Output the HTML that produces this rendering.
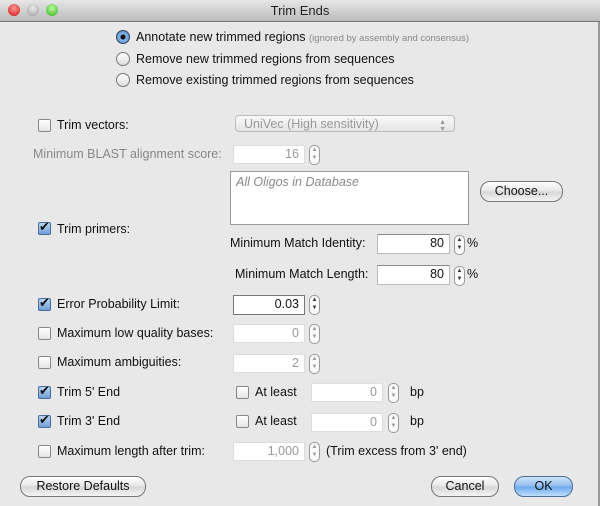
<!DOCTYPE html>
<html><head><style>
body{margin:0;width:600px;height:506px;overflow:hidden;background:#e8e8e8;font-family:"Liberation Sans",sans-serif;font-size:12.5px;color:#111;position:relative}
.a{position:absolute;white-space:nowrap}
.tb{position:absolute;left:0;top:0;width:600px;height:21px;background:linear-gradient(#e6e6e6,#bcbcbc);border-bottom:1px solid #777;text-align:center;line-height:21px;font-size:13px;color:#222}
.dot{position:absolute;top:4px;width:12px;height:12px;border-radius:50%}
.rad{position:absolute;width:12px;height:12px;border-radius:50%;border:1px solid #777;background:linear-gradient(#fff,#ddd)}
.cb{position:absolute;width:11px;height:11px;border:1px solid #888;border-radius:2px;background:linear-gradient(#fff,#e4e4e4)}
.cb.on{background:linear-gradient(#b8d4f0,#6fa0d8);border-color:#4a6f9a}
.cb.on:after{content:"✔";position:absolute;left:0px;top:-4px;font-size:13px;color:#111}
.f{position:absolute;background:#fff;border:1px solid #bbb;border-top-color:#888;text-align:right;padding-right:5px;box-sizing:border-box;line-height:17px}
.f.d{color:#999;border-color:#ddd}
.st{position:absolute;width:9px;height:18px;border:1px solid #999;border-radius:5px;background:#fafafa;font-size:6px;line-height:8px;text-align:center;color:#333}
.btn{position:absolute;height:19px;border:1px solid #777;border-radius:10px;background:linear-gradient(#fff,#e4e4e4 50%,#d6d6d6 51%,#f4f4f4);text-align:center;line-height:19px;font-size:12.5px}
.g{color:#888}
</style></head><body>
<div class="tb">Trim Ends</div>
<div class="dot" style="left:8px;background:radial-gradient(circle at 50% 35%,#f99,#c11)"></div>
<div class="dot" style="left:27px;background:radial-gradient(circle at 50% 35%,#eee,#999)"></div>
<div class="dot" style="left:46px;background:radial-gradient(circle at 50% 35%,#bf9,#3a2)"></div>
<div style="position:absolute;right:0;top:22px;width:2px;height:484px;background:#999"></div>

<div class="rad" style="left:116px;top:30px;background:radial-gradient(circle,#111 0 2px,#8ab8ea 3px,#3c7ed0);border-color:#345"></div>
<div class="a" style="left:136px;top:30px">Annotate new trimmed regions <span class="g" style="font-size:9.5px">(ignored by assembly and consensus)</span></div>
<div class="rad" style="left:116px;top:52px"></div>
<div class="a" style="left:136px;top:52px">Remove new trimmed regions from sequences</div>
<div class="rad" style="left:116px;top:73px"></div>
<div class="a" style="left:136px;top:73px">Remove existing trimmed regions from sequences</div>

<div class="cb" style="left:38px;top:119px"></div>
<div class="a" style="left:57px;top:118px">Trim vectors:</div>
<div class="a" style="left:235px;top:115px;width:220px;height:17px;border:1px solid #bbb;border-radius:4px;background:linear-gradient(#fafafa,#e4e4e4);color:#999;line-height:17px;padding-left:8px;box-sizing:border-box">UniVec (High sensitivity)<span style="position:absolute;right:8px;font-size:7px;line-height:7px;top:3px">▲<br>▼</span></div>

<div class="a g" style="left:33px;top:147px">Minimum BLAST alignment score:</div>
<div class="f d" style="left:233px;top:145px;width:72px;height:19px">16</div>
<div class="st" style="left:309px;top:145px;color:#999">▲<br>▼</div>

<div class="a" style="left:230px;top:171px;width:239px;height:54px;background:#fff;border:1px solid #999;box-sizing:border-box;color:#888;font-style:italic;padding:3px 5px">All Oligos in Database</div>
<div class="btn" style="left:480px;top:181px;width:81px">Choose...</div>
<div class="cb on" style="left:38px;top:222px"></div>
<div class="a" style="left:57px;top:222px">Trim primers:</div>

<div class="a" style="left:230px;top:236px">Minimum Match Identity:</div>
<div class="f" style="left:377px;top:234px;width:73px;height:20px">80</div>
<div class="st" style="left:454px;top:235px">▲<br>▼</div>
<div class="a" style="left:467px;top:236px">%</div>
<div class="a" style="left:235px;top:267px">Minimum Match Length:</div>
<div class="f" style="left:377px;top:265px;width:73px;height:20px">80</div>
<div class="st" style="left:454px;top:266px">▲<br>▼</div>
<div class="a" style="left:467px;top:267px">%</div>

<div class="cb on" style="left:38px;top:298px"></div>
<div class="a" style="left:57px;top:297px">Error Probability Limit:</div>
<div class="f" style="left:233px;top:295px;width:72px;height:20px;border-color:#777">0.03</div>
<div class="st" style="left:309px;top:295px">▲<br>▼</div>

<div class="cb" style="left:38px;top:327px"></div>
<div class="a" style="left:57px;top:326px">Maximum low quality bases:</div>
<div class="f d" style="left:233px;top:324px;width:72px;height:19px">0</div>
<div class="st" style="left:309px;top:324px;color:#999">▲<br>▼</div>

<div class="cb" style="left:38px;top:356px"></div>
<div class="a" style="left:57px;top:355px">Maximum ambiguities:</div>
<div class="f d" style="left:233px;top:354px;width:72px;height:19px">2</div>
<div class="st" style="left:309px;top:354px;color:#999">▲<br>▼</div>

<div class="cb on" style="left:38px;top:386px"></div>
<div class="a" style="left:57px;top:385px">Trim 5' End</div>
<div class="cb" style="left:236px;top:386px"></div>
<div class="a" style="left:255px;top:385px">At least</div>
<div class="f d" style="left:311px;top:383px;width:72px;height:19px">0</div>
<div class="st" style="left:388px;top:383px;color:#999">▲<br>▼</div>
<div class="a" style="left:410px;top:385px">bp</div>

<div class="cb on" style="left:38px;top:415px"></div>
<div class="a" style="left:57px;top:414px">Trim 3' End</div>
<div class="cb" style="left:236px;top:415px"></div>
<div class="a" style="left:255px;top:414px">At least</div>
<div class="f d" style="left:311px;top:413px;width:72px;height:19px">0</div>
<div class="st" style="left:388px;top:413px;color:#999">▲<br>▼</div>
<div class="a" style="left:410px;top:414px">bp</div>

<div class="cb" style="left:38px;top:445px"></div>
<div class="a" style="left:57px;top:444px">Maximum length after trim:</div>
<div class="f d" style="left:233px;top:442px;width:72px;height:19px">1,000</div>
<div class="st" style="left:309px;top:442px;color:#999">▲<br>▼</div>
<div class="a" style="left:326px;top:444px">(Trim excess from 3' end)</div>

<div class="btn" style="left:20px;top:476px;width:124px">Restore Defaults</div>
<div class="btn" style="left:431px;top:476px;width:66px">Cancel</div>
<div class="btn" style="left:514px;top:476px;width:57px;background:linear-gradient(#cfe4fb,#8ebcef 50%,#6aa6ea 51%,#bfe0fc);border-color:#4a6f9a">OK</div>
</body></html>
